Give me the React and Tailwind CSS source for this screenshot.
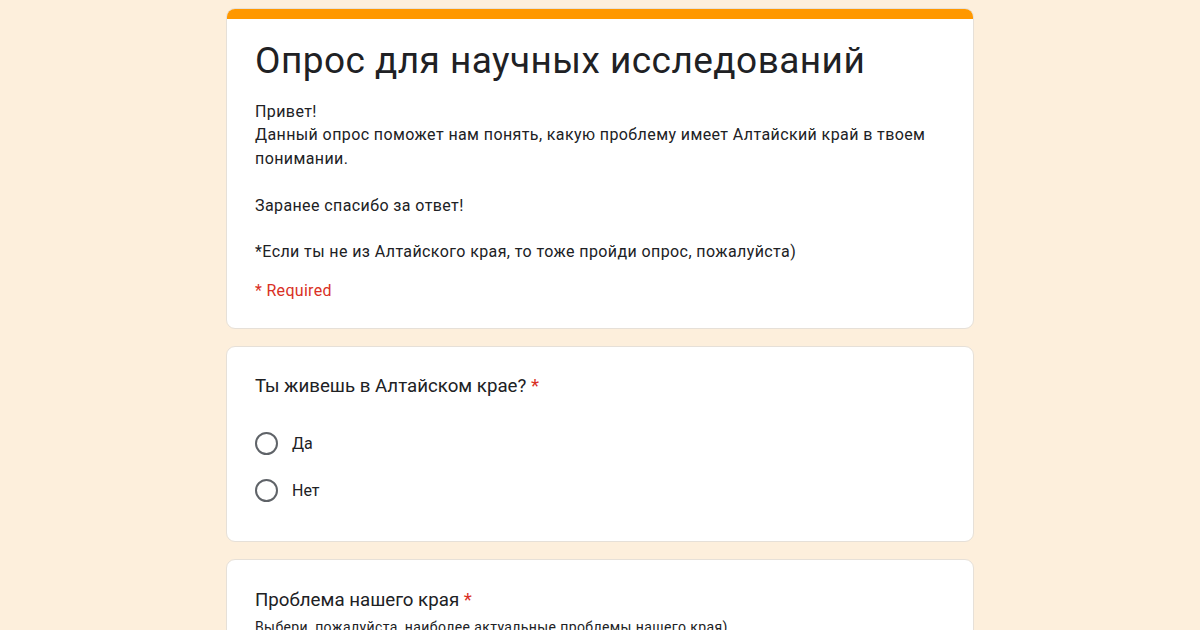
export default function App() {
  const font = { fontFamily: 'Roboto, "Noto Sans", sans-serif' };
  return (
    <div className="min-h-[630px] h-[630px] overflow-hidden bg-[#fdefdc]" style={font}>
      <div className="mx-auto w-[748px] pt-[8px] flex flex-col gap-[17px]">
        {/* Шапка формы */}
        <div className="rounded-[9px] bg-white border border-[#e6e0d8] overflow-hidden">
          <div className="h-[11px] bg-[#ff9800] -mx-px -mt-px" />
          <div className="px-[28px] pt-[20px] pb-[26px]">
            <h1 className="text-[37px] leading-[44px] text-[#202124] tracking-[0.45px]">
              Опрос для научных исследований
            </h1>
            <div className="mt-[17px] text-[16px] leading-[23.4px] text-[#202124] tracking-[0.4px] whitespace-pre-line">
              {'Привет!\nДанный опрос поможет нам понять, какую проблему имеет Алтайский край в твоем\nпонимании.\n\nЗаранее спасибо за ответ!\n\n*Если ты не из Алтайского края, то тоже пройди опрос, пожалуйста)'}
            </div>
            <div className="mt-[15px] text-[16px] leading-[23px] text-[#d93025] tracking-[0.3px]">* Required</div>
          </div>
        </div>

        {/* Вопрос 1 */}
        <div className="rounded-[9px] bg-white border border-[#e6e0d8] px-[28px] pt-[26px] pb-[38px]">
          <div className="text-[18.7px] leading-[27px] text-[#202124]">
            Ты живешь в Алтайском крае? <span className="text-[#d93025]">*</span>
          </div>
          <div className="mt-[32px] flex flex-col gap-[23px]">
            {['Да', 'Нет'].map(opt => (
              <label key={opt} className="flex items-center gap-[14px] h-[24px]">
                <span className="w-[23px] h-[23px] rounded-full border-[2px] border-[#5f6368]" />
                <span className="text-[16px] text-[#202124]">{opt}</span>
              </label>
            ))}
          </div>
        </div>

        {/* Вопрос 2 */}
        <div className="rounded-[9px] bg-white border border-[#e6e0d8] px-[28px] pt-[27px] pb-[30px]">
          <div className="text-[18.7px] leading-[27px] text-[#202124]">
            Проблема нашего края <span className="text-[#d93025]">*</span>
          </div>
          <div className="mt-[3px] text-[14px] leading-[20px] text-[#202124] tracking-[0.4px]">
            Выбери, пожалуйста, наиболее актуальные проблемы нашего края)
          </div>
        </div>
      </div>
    </div>
  );
}
